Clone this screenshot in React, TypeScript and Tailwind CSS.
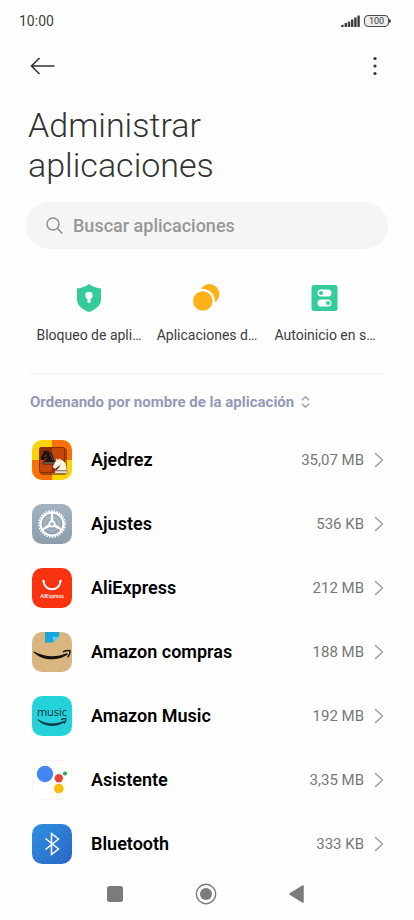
import React from 'react';

interface AppItem {
    name: string;
    size: string;
    Icon: React.FC;
}

interface QuickAction {
    label: string;
    Icon: React.FC;
}

const ICON_CLASS = 'w-10 h-10 shrink-0 rounded-[10px]';

// Silhouette of a knight looking left, on a 45x45 board square
const Knight: React.FC<{ fill: string; stroke: string }> = ({ fill, stroke }) => (
    <g fill={fill} stroke={stroke} strokeWidth="2" strokeLinejoin="round">
        <path d="M22 10C32.500 11 38.500 18 38 36L15 36C15 30 25 32.500 23 18" />
        <path d="M24 18C24.400 20.900 18.500 25.400 16 27C13 29 13.200 31.300 11 31C10 30 12.400 28 11 28C10 28 11.200 29.200 10 30C9 30 6 31 6 26C6 24 12 14 12 14C12 14 13.900 12.100 14 10.500C13.300 9.500 13.500 8.500 13.500 7.500C14.500 6.500 16.500 10 16.500 10L18.500 10C18.500 10 19.300 8 21 7C22 7 22 10 22 10" />
        <path d="M11 37H40V42H11Z" />
        <circle cx="15" cy="17" r="1" fill={stroke} />
    </g>
);

const ChessIcon: React.FC = () => (
    <svg viewBox="0 0 40 40" className={ICON_CLASS} aria-hidden="true">
        <rect width="40" height="40" fill="#fcd307" />
        <path d="M20 0H40V20H20ZM0 20H20V40H0Z" fill="#f7710b" />
        <rect x="8" y="8" width="27" height="27" rx="3" fill="#5a1503" opacity="0.5" />
        <rect x="7" y="7" width="26" height="26" rx="2" fill="#8f2c0a" />
        <path d="M20 8H31Q32 8 32 9V20H20ZM8 20H20V32H9Q8 32 8 31Z" fill="#c4460b" />
        <g transform="translate(7 8) scale(0.38)">
            <Knight fill="#1c1412" stroke="#1c1412" />
        </g>
        <path d="M11.500 23H22" stroke="#d8b48a" strokeWidth="0.800" />
        <path d="M14 14.500L12.500 17M17 13.500C19.500 15 20.500 17 20.500 20" fill="none" stroke="#8d7460" strokeWidth="0.700" />
        <g transform="translate(20 17) scale(0.38)">
            <Knight fill="#3b1408" stroke="#3b1408" />
        </g>
        <g transform="translate(19 16) scale(0.4)">
            <Knight fill="#fdf5e6" stroke="#fdf5e6" />
            <path d="M11 37H40" stroke="#4a3024" strokeWidth="2" />
        </g>
    </svg>
);

const SPOKES = [90, 210, 330];

const SettingsIcon: React.FC = () => (
    <svg viewBox="0 0 40 40" className={ICON_CLASS} aria-hidden="true">
        <defs>
            <linearGradient id="settingsBg" x1="0" y1="0" x2="0" y2="1">
                <stop offset="0" stopColor="#a3b3c2" />
                <stop offset="1" stopColor="#8b9dac" />
            </linearGradient>
        </defs>
        <rect width="40" height="40" fill="url(#settingsBg)" />
        <circle cx="20" cy="20" r="7" fill="none" stroke="#b5c2ce" strokeWidth="1" />
        <circle cx="20" cy="20" r="11.500" fill="none" stroke="#fff" strokeWidth="2" />
        <circle cx="20" cy="20" r="13.100" fill="none" stroke="#fff" strokeWidth="1.600" strokeDasharray="1.500 1.240" />
        {SPOKES.map((angle) => (
            <path key={angle} d="M20 18.400L31 19L31 21L20 21.600Z" fill="#fff" transform={`rotate(${angle + 180} 20 20)`} />
        ))}
        <circle cx="20" cy="20" r="3.500" fill="#fff" />
        <circle cx="20" cy="20" r="1.700" fill="#97a8b7" />
    </svg>
);

const AliExpressIcon: React.FC = () => (
    <svg viewBox="0 0 40 40" className={ICON_CLASS} aria-hidden="true">
        <rect width="40" height="40" fill="#f9320f" />
        <path d="M11.500 13C12 24 28 24 28.500 13" fill="none" stroke="#fff" strokeWidth="1.900" strokeLinecap="round" />
        <circle cx="11.500" cy="13" r="1.200" fill="#fff" />
        <circle cx="28.500" cy="13" r="1.200" fill="#fff" />
        <text x="20" y="30" textAnchor="middle" fontFamily="Roboto, sans-serif" fontSize="5" fontWeight="500" fill="#fff">AliExpress</text>
    </svg>
);

const AmazonIcon: React.FC = () => (
    <svg viewBox="0 0 40 40" className={ICON_CLASS} aria-hidden="true">
        <rect width="40" height="40" fill="#d9b67e" />
        <path d="M13 0H27V4.500L21.500 10.500L13 10.500Z" fill="#16a6dc" />
        <path d="M27 4.500L21.500 10.500L20.500 5Z" fill="#5fcdf2" />
        <path d="M2 19.500C13 25.500 25 25.500 34.500 21.300C35.500 21 36.200 22 35.400 22.700C25 29.500 11 29 1.600 20.200C1.300 19.700 1.600 19.300 2 19.500Z" fill="#161210" />
        <path d="M31.500 19.600C34 18.300 36.500 18.200 38 18.800C38.200 20.500 37.500 22.800 36 24.800" fill="none" stroke="#161210" strokeWidth="1.500" strokeLinecap="round" strokeLinejoin="round" />
    </svg>
);

const AmazonMusicIcon: React.FC = () => (
    <svg viewBox="0 0 40 40" className={ICON_CLASS} aria-hidden="true">
        <rect width="40" height="40" fill="#25d1da" />
        <text x="20" y="20" textAnchor="middle" fontFamily="Open Sans, sans-serif" fontSize="11" fontWeight="500" fill="#11313a">music</text>
        <path d="M6 23.500C14 28.800 24 28.800 32 25C32.700 24.700 33.100 25.400 32.600 26C24 31.500 12.500 30.800 5.700 24Z" fill="#11313a" stroke="#11313a" strokeWidth="0.400" />
        <path d="M29.500 23.400C31.500 22.500 33 22.500 34 22.900C34.100 24.300 33.600 25.800 32.500 27.200" fill="none" stroke="#11313a" strokeWidth="1.200" strokeLinecap="round" strokeLinejoin="round" />
    </svg>
);

const AssistantIcon: React.FC = () => (
    <svg viewBox="0 0 40 40" className={ICON_CLASS} aria-hidden="true">
        <rect x="0.500" y="0.500" width="39" height="39" rx="9.500" fill="#fff" stroke="#f6f6f6" />
        <circle cx="13" cy="14" r="8.200" fill="#4285f4" />
        <circle cx="26.800" cy="18.200" r="4.200" fill="#ea4335" />
        <circle cx="33" cy="13.500" r="2.100" fill="#34a853" />
        <circle cx="26.800" cy="28.500" r="4.800" fill="#fbbc05" />
    </svg>
);

const BluetoothIcon: React.FC = () => (
    <svg viewBox="0 0 40 40" className={ICON_CLASS} aria-hidden="true">
        <defs>
            <linearGradient id="bluetoothBg" x1="0" y1="0" x2="1" y2="1">
                <stop offset="0" stopColor="#2f91e2" />
                <stop offset="1" stopColor="#2a66c6" />
            </linearGradient>
        </defs>
        <rect width="40" height="40" fill="url(#bluetoothBg)" />
        <path d="M13.500 14.500L26.500 25L19.500 30.500V9.500L26.500 15L13.500 25.500" fill="none" stroke="#fff" strokeWidth="1.500" strokeLinejoin="miter" />
    </svg>
);

const ShieldIcon: React.FC = () => (
    <svg viewBox="0 0 28 28" className="w-7 h-7" aria-hidden="true">
        <path d="M14 0C17.500 2.500 21.500 4 26 4.600V16C26 21.500 20 26 14 28C8 26 2 21.500 2 16V4.600C6.500 4 10.500 2.500 14 0Z" fill="#34cc9b" />
        <circle cx="14" cy="11.500" r="3.700" fill="#fff" />
        <path d="M12.500 13H15.500V18Q15.500 19 14 19Q12.500 19 12.500 18Z" fill="#fff" />
    </svg>
);

const DualAppsIcon: React.FC = () => (
    <svg viewBox="0 0 28 28" className="w-7 h-7" aria-hidden="true">
        <circle cx="16.500" cy="10" r="10" fill="#feb21a" />
        <circle cx="9.800" cy="17" r="12" fill="#fff" />
        <circle cx="9.800" cy="17" r="9.800" fill="#feb21a" />
    </svg>
);

const AutostartIcon: React.FC = () => (
    <svg viewBox="0 0 28 28" className="w-7 h-7" aria-hidden="true">
        <rect x="0.500" y="1" width="26" height="26" rx="2.500" fill="#34cc9b" />
        <rect x="6.500" y="5.500" width="14" height="7" rx="3.500" fill="#fff" />
        <circle cx="10" cy="9" r="2" fill="#34cc9b" />
        <rect x="6.500" y="15.500" width="14" height="7" rx="3.500" fill="#fff" />
        <circle cx="17" cy="19" r="2" fill="#34cc9b" />
    </svg>
);

const QUICK_ACTIONS: QuickAction[] = [
    { label: 'Bloqueo de apli…', Icon: ShieldIcon },
    { label: 'Aplicaciones d…', Icon: DualAppsIcon },
    { label: 'Autoinicio en s…', Icon: AutostartIcon },
];

const APPS: AppItem[] = [
    { name: 'Ajedrez', size: '35,07 MB', Icon: ChessIcon },
    { name: 'Ajustes', size: '536 KB', Icon: SettingsIcon },
    { name: 'AliExpress', size: '212 MB', Icon: AliExpressIcon },
    { name: 'Amazon compras', size: '188 MB', Icon: AmazonIcon },
    { name: 'Amazon Music', size: '192 MB', Icon: AmazonMusicIcon },
    { name: 'Asistente', size: '3,35 MB', Icon: AssistantIcon },
    { name: 'Bluetooth', size: '333 KB', Icon: BluetoothIcon },
];

const StatusBar: React.FC = () => (
    <div className="h-[42px] pl-[19px] pr-[23px] flex items-center justify-between text-[#3c3c3c]">
        <span className="text-[14px] leading-5">10:00</span>
        <div className="flex items-center gap-1">
            <svg viewBox="0 0 19 12" className="w-[19px] h-3" fill="#3c3c3c" aria-hidden="true">
                <path d="M0 10.500L2.600 9.500V12H0ZM3.600 8H6V12H3.600ZM6.800 6.500H9.200V12H6.800ZM10 4.500H12.400V12H10ZM13.200 2.500H15.600V12H13.200ZM16.400 0.500H18.800V12H16.400Z" />
            </svg>
            <div className="flex items-center">
                <span className="w-[25px] h-3 rounded-[4px] border border-[#4a4a4a] bg-[#ececec] flex items-center justify-center text-[9px] leading-none">100</span>
                <span className="w-[2px] h-1 rounded-r-sm bg-[#4a4a4a]"></span>
            </div>
        </div>
    </div>
);

const App: React.FC = () => {
    return (
        <div className="min-h-screen bg-[#fefefe] flex flex-col font-['Roboto',sans-serif]">
            <StatusBar />

            <header className="h-12 pl-[30px] pr-7 flex items-center justify-between">
                <button type="button" aria-label="Atrás">
                    <svg viewBox="0 0 25 18" className="w-[25px] h-[18px]" fill="none" stroke="#333" strokeWidth="1.600" aria-hidden="true">
                        <path d="M9.500 1L1.500 9L9.500 17M1.500 9H24.500" />
                    </svg>
                </button>
                <button type="button" aria-label="Más opciones">
                    <svg viewBox="0 0 22 20" className="w-[22px] h-5" fill="#333" aria-hidden="true">
                        <circle cx="11" cy="2.500" r="1.600" />
                        <circle cx="11" cy="10" r="1.600" />
                        <circle cx="11" cy="17.500" r="1.600" />
                    </svg>
                </button>
            </header>

            <main>
                <h1 className="mt-[15px] px-7 text-[34px] leading-10 font-light text-[#333]">
                    Administrar<br />aplicaciones
                </h1>

                <label htmlFor="buscar" className="mt-[17px] mx-[26px] h-[47px] px-5 rounded-full bg-[#f5f5f5] flex items-center gap-[10px]">
                    <svg viewBox="0 0 17 17" className="w-[17px] h-[17px] shrink-0" fill="none" stroke="#8f8f8f" strokeWidth="1.500" aria-hidden="true">
                        <circle cx="7" cy="7" r="6" />
                        <path d="M11.300 11.300L16.300 16.500" />
                    </svg>
                    <input
                        id="buscar"
                        type="search"
                        aria-label="Buscar aplicaciones"
                        placeholder="Buscar aplicaciones"
                        className="flex-1 min-w-0 bg-transparent outline-none text-[18px] leading-6 font-medium text-[#333] placeholder:text-[#979797]"
                    />
                </label>

                <div className="mt-[35px] px-[30px] grid grid-cols-3">
                    {QUICK_ACTIONS.map(({ label, Icon }) => (
                        <button key={label} type="button" className="flex flex-col items-center gap-[13px]">
                            <Icon />
                            <span className="text-[14px] leading-5 text-[#3c3c3c] whitespace-nowrap">{label}</span>
                        </button>
                    ))}
                </div>

                <hr className="mt-7 mx-[30px] border-[#efefef]" />

                <button type="button" className="mt-[18px] ml-[30px] flex items-center gap-[7px] text-[15px] leading-5 font-bold text-[#9599b9]">
                    Ordenando por nombre de la aplicación
                    <svg viewBox="0 0 9 12" className="w-[9px] h-3" fill="none" stroke="#9599b9" strokeWidth="1.300" aria-hidden="true">
                        <path d="M0.800 4.300L4.500 0.800L8.200 4.300M0.800 7.700L4.500 11.200L8.200 7.700" />
                    </svg>
                </button>

                <ul className="mt-4">
                    {APPS.map(({ name, size, Icon }) => (
                        <li key={name}>
                            <button type="button" className="w-full h-16 pl-8 pr-[30px] flex items-center text-left">
                                <Icon />
                                <span className="ml-[19px] flex-1 text-[18px] leading-6 font-semibold text-black">{name}</span>
                                <span className="text-[15px] leading-5 text-[#777]">{size}</span>
                                <svg viewBox="0 0 10 16" className="ml-[10px] w-[10px] h-4" fill="none" stroke="#999" strokeWidth="1.300" aria-hidden="true">
                                    <path d="M1 1L8.500 8L1 15" />
                                </svg>
                            </button>
                        </li>
                    ))}
                </ul>
            </main>

            <nav className="mt-px h-[34px] mb-2 pl-[70px] pr-[72px] grid grid-cols-3 items-center justify-items-center">
                <button type="button" aria-label="Recientes">
                    <svg viewBox="0 0 22 22" className="w-[22px] h-[22px]" aria-hidden="true">
                        <rect x="3" y="3" width="16" height="16" rx="2.500" fill="#7b7b7b" />
                    </svg>
                </button>
                <button type="button" aria-label="Inicio">
                    <svg viewBox="0 0 22 22" className="w-[22px] h-[22px]" aria-hidden="true">
                        <circle cx="11" cy="11" r="9.700" fill="none" stroke="#7b7b7b" strokeWidth="1.400" />
                        <circle cx="11" cy="11" r="6" fill="#7b7b7b" />
                    </svg>
                </button>
                <button type="button" aria-label="Volver">
                    <svg viewBox="0 0 22 22" className="w-[22px] h-[22px]" aria-hidden="true">
                        <path d="M4 11L17 3V19Z" fill="#7b7b7b" stroke="#7b7b7b" strokeWidth="1.500" strokeLinejoin="round" />
                    </svg>
                </button>
            </nav>
        </div>
    );
};

export default App;
